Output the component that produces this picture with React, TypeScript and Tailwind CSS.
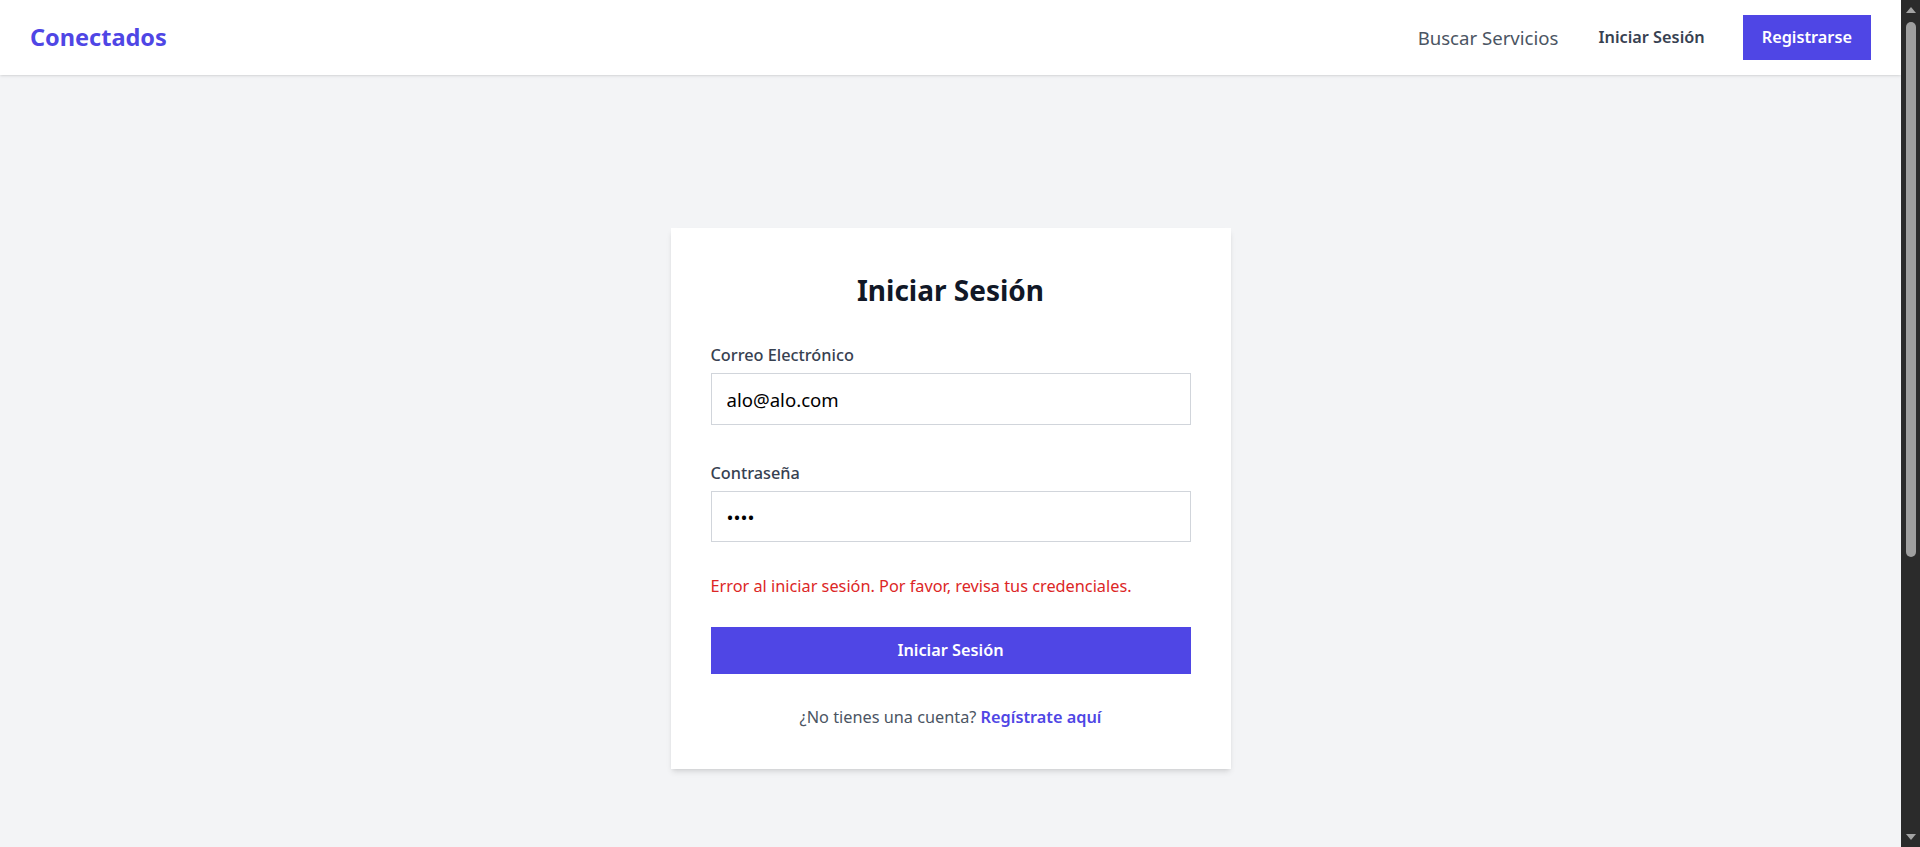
import React from "react";

const font = "font-['Noto_Sans','Open_Sans',sans-serif]";

function Navbar() {
  return (
    <nav className="h-[75px] bg-white shadow-sm flex items-center justify-between px-[30px]">
      <a href="#" className="text-[23.5px] font-bold text-[#4f46e5] leading-none">
        Conectados
      </a>
      <div className="flex items-center">
        <a href="#" className="text-[18.6px] text-[#4b5563] mr-[40px]">
          Buscar Servicios
        </a>
        <a href="#" className="text-[16.3px] font-semibold text-[#374151] mr-[38px]">
          Iniciar Sesión
        </a>
        <a
          href="#"
          className="h-[45px] px-[19px] flex items-center bg-[#4f46e5] text-white text-[16.3px] font-semibold"
        >
          Registrarse
        </a>
      </div>
    </nav>
  );
}

function LoginCard() {
  return (
    <div className="w-[560px] bg-white shadow-md px-[40px] pt-[40px] pb-[39px]">
      <h2 className="text-[28px] leading-[45px] font-bold text-[#111827] text-center mb-[30px]">
        Iniciar Sesión
      </h2>
      <form onSubmit={(e) => e.preventDefault()}>
        <div className="mb-[36px]">
          <label className="block text-[16.3px] leading-[25px] font-medium text-[#374151] mb-[5px]">
            Correo Electrónico
          </label>
          <input
            type="email"
            readOnly
            value="alo@alo.com"
            className="block w-full h-[52px] px-[15px] border border-[#d1d5db] text-[18.6px] text-black outline-none"
          />
        </div>
        <div className="mb-[32px]">
          <label className="block text-[16.3px] leading-[25px] font-medium text-[#374151] mb-[5px]">
            Contraseña
          </label>
          <input
            type="password"
            readOnly
            value="alo1"
            className="block w-full h-[51px] px-[15px] border border-[#d1d5db] text-[18.6px] text-black outline-none"
          />
        </div>
        <p className="text-[16.3px] leading-[25px] text-[#dc2626] mb-[28px]">
          Error al iniciar sesión. Por favor, revisa tus credenciales.
        </p>
        <button
          type="submit"
          className="w-full h-[47px] bg-[#4f46e5] text-white text-[16.3px] font-semibold"
        >
          Iniciar Sesión
        </button>
      </form>
      <p className="mt-[31px] text-center text-[16.3px] leading-[25px] text-[#4b5563]">
        ¿No tienes una cuenta?{" "}
        <a href="#" className="font-semibold text-[#4f46e5]">
          Regístrate aquí
        </a>
      </p>
    </div>
  );
}

// page scrollbar as drawn in the reference screenshot
function Scrollbar() {
  return (
    <div className="fixed top-0 right-0 h-screen w-[19px] bg-[#2b2b2b] flex flex-col items-center">
      <svg width="12" height="8" viewBox="0 0 12 8" className="mt-[6px]">
        <path d="M6 1 L11 7 L1 7 Z" fill="#a3a3a3" />
      </svg>
      <div className="mt-[8px] w-[10px] h-[535px] rounded-full bg-[#9f9f9f]" />
      <div className="flex-1" />
      <svg width="12" height="8" viewBox="0 0 12 8" className="mb-[6px]">
        <path d="M1 1 L11 1 L6 7 Z" fill="#a3a3a3" />
      </svg>
    </div>
  );
}

export default function App() {
  return (
    <div className={`${font} bg-[#f3f4f6] min-h-screen`}>
      <div className="mr-[19px]">
        <Navbar />
        <main className="min-h-[847px] flex items-center justify-center">
          <LoginCard />
        </main>
        <footer className="h-[360px] bg-[#f3f4f6]" />
      </div>
      <Scrollbar />
    </div>
  );
}
